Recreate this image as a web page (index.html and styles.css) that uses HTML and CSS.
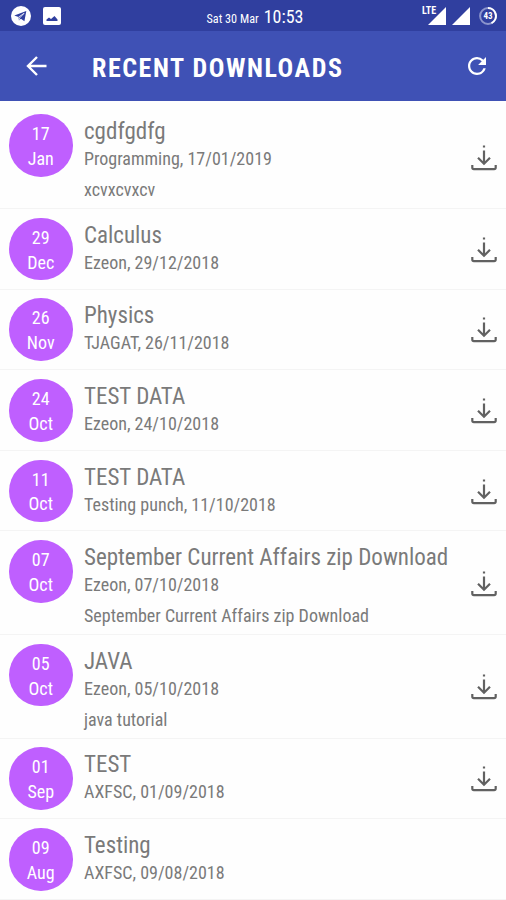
FILE: index.html
```html
<!DOCTYPE html>
<html lang="en">
<head>
  <meta charset="UTF-8">
  <meta name="viewport" content="width=device-width, initial-scale=1.0">
  <title>Recent Downloads</title>
  <link rel="stylesheet" href="styles.css">
</head>
<body>
  <!-- shared download icon -->
  <svg width="0" height="0" class="defs">
    <symbol id="download" viewBox="0 0 26 26">
      <path d="M13 .5v2M13 5.500v13M7 12.800l6 6 6-6M1.300 20v2.600q0 1.600 1.600 1.600h20.200q1.600 0 1.600-1.600V20"/>
    </symbol>
  </svg>

  <div class="status-bar">
    <div class="status-left">
      <svg width="20" height="20" viewBox="0 0 20 20">
        <circle cx="10" cy="10" r="10" fill="#fff"/>
        <path d="M3.300 9.600L15.300 5l-1.900 10.200-3.500-2.500-2 1.900-.4-3.500z" fill="#303f9f"/>
        <path d="M7.500 11.100l5.600-3.800-4.400 4.600-.8 2.300" fill="none" stroke="#fff" stroke-width=".8"/>
      </svg>
      <svg width="18" height="18" viewBox="0 0 18 18">
        <rect width="18" height="18" rx="2" fill="#fff"/>
        <path d="M3.500 14v-1.500l2.500-2 2 1.500L11.500 9l3 3.500V14z" fill="#303f9f"/>
      </svg>
    </div>
    <div class="clock"><span class="date">Sat 30 Mar</span><span class="time">10:53</span></div>
    <div class="status-right">
      <div class="signal">
        <svg width="18" height="18" viewBox="0 0 18 18"><path d="M18 0v18H0z" fill="#fff"/></svg>
        <span class="lte">LTE</span>
      </div>
      <svg width="18" height="18" viewBox="0 0 18 18"><path d="M18 0v18H0z" fill="#fff"/></svg>
      <div class="battery">
        <svg width="18" height="18" viewBox="0 0 18 18" fill="none">
          <circle cx="9" cy="9" r="7.900" stroke="#8c95cc" stroke-width="2"/>
          <path d="M9 1.100a7.900 7.900 0 0 1 3.500 15" stroke="#fff" stroke-width="2"/>
        </svg>
        <span>43</span>
      </div>
    </div>
  </div>

  <header class="toolbar">
    <svg class="back" width="21" height="20" viewBox="0 0 21 20"><path d="M20.500 10H2M11 1L2 10l9 9"/></svg>
    <h1>RECENT DOWNLOADS</h1>
    <svg class="refresh" width="18" height="18" viewBox="4 4 16 16"><path d="M17.650 6.350A7.958 7.958 0 0 0 12 4c-4.420 0-7.990 3.580-7.990 8s3.570 8 7.990 8c3.730 0 6.840-2.550 7.730-6h-2.080A5.990 5.990 0 0 1 12 18c-3.310 0-6-2.690-6-6s2.690-6 6-6c1.660 0 3.140.690 4.220 1.780L13 11h7V4l-2.350 2.350z"/></svg>
  </header>

  <ul class="list">
    <li class="row tall">
      <div class="badge"><span>17</span><span>Jan</span></div>
      <div class="text">
        <h2>cgdfgdfg</h2>
        <p>Programming, 17/01/2019</p>
        <p class="desc">xcvxcvxcv</p>
      </div>
      <svg class="dl"><use href="#download"/></svg>
    </li>
    <li class="row">
      <div class="badge"><span>29</span><span>Dec</span></div>
      <div class="text">
        <h2>Calculus</h2>
        <p>Ezeon, 29/12/2018</p>
      </div>
      <svg class="dl"><use href="#download"/></svg>
    </li>
    <li class="row">
      <div class="badge"><span>26</span><span>Nov</span></div>
      <div class="text">
        <h2>Physics</h2>
        <p>TJAGAT, 26/11/2018</p>
      </div>
      <svg class="dl"><use href="#download"/></svg>
    </li>
    <li class="row">
      <div class="badge"><span>24</span><span>Oct</span></div>
      <div class="text">
        <h2>TEST DATA</h2>
        <p>Ezeon, 24/10/2018</p>
      </div>
      <svg class="dl"><use href="#download"/></svg>
    </li>
    <li class="row">
      <div class="badge"><span>11</span><span>Oct</span></div>
      <div class="text">
        <h2>TEST DATA</h2>
        <p>Testing punch, 11/10/2018</p>
      </div>
      <svg class="dl"><use href="#download"/></svg>
    </li>
    <li class="row tall">
      <div class="badge"><span>07</span><span>Oct</span></div>
      <div class="text">
        <h2>September Current Affairs zip Download</h2>
        <p>Ezeon, 07/10/2018</p>
        <p class="desc">September Current Affairs zip Download</p>
      </div>
      <svg class="dl"><use href="#download"/></svg>
    </li>
    <li class="row tall">
      <div class="badge"><span>05</span><span>Oct</span></div>
      <div class="text">
        <h2>JAVA</h2>
        <p>Ezeon, 05/10/2018</p>
        <p class="desc">java tutorial</p>
      </div>
      <svg class="dl"><use href="#download"/></svg>
    </li>
    <li class="row">
      <div class="badge"><span>01</span><span>Sep</span></div>
      <div class="text">
        <h2>TEST</h2>
        <p>AXFSC, 01/09/2018</p>
      </div>
      <svg class="dl"><use href="#download"/></svg>
    </li>
    <li class="row">
      <div class="badge"><span>09</span><span>Aug</span></div>
      <div class="text">
        <h2>Testing</h2>
        <p>AXFSC, 09/08/2018</p>
      </div>
    </li>
  </ul>
</body>
</html>
```
FILE: styles.css
```css
:root {
  --primary: #3f51b5;
  --primary-dark: #303f9f;
  --badge: #bf5fff;
  --text: #7a7a7a;
}
* {
  box-sizing: border-box;
}
body {
  margin: 0;
  height: 900px;
  overflow: hidden;
  background: #fefefe;
  color: var(--text);
  font-family: 'Roboto Condensed', Roboto, sans-serif;
  font-stretch: 75%;
}
h1, h2, p {
  margin: 0;
  font-weight: 400;
  white-space: nowrap;
}
.defs {
  position: absolute;
}
.status-bar {
  height: 31px;
  padding: 1px 9px 0 11px;
  display: grid;
  grid-template-columns: 1fr auto 1fr;
  align-items: center;
  background: var(--primary-dark);
  color: #fff;
}
.status-left, .status-right {
  display: flex;
  align-items: center;
  gap: 12px;
}
.status-right {
  justify-content: flex-end;
  gap: 6px;
}
.status-right svg, .status-left svg {
  display: block;
}
.clock {
  display: flex;
  align-items: baseline;
  gap: 5px;
  padding: 1px 0 0 2px;
}
.date {
  font-size: 12.200px;
}
.time {
  font-size: 18px;
}
.signal {
  position: relative;
}
.lte {
  position: absolute;
  left: -6px;
  top: -1px;
  font-size: 10px;
  line-height: 9px;
  font-weight: 700;
  background: var(--primary-dark);
}
.battery {
  position: relative;
  margin-left: 3px;
}
.battery span {
  position: absolute;
  inset: 0;
  line-height: 18px;
  text-align: center;
  font-size: 9px;
  font-weight: 700;
}
.toolbar {
  height: 70px;
  padding: 0 20px 0 26px;
  display: flex;
  align-items: center;
  background: var(--primary);
  color: #fff;
}
.toolbar h1 {
  flex: 1;
  margin-left: 45px;
  padding-top: 3px;
  font-size: 26px;
  font-weight: 700;
  letter-spacing: 1.550px;
}
.back {
  fill: none;
  stroke: #fff;
  stroke-width: 2.400;
}
.refresh {
  fill: #fff;
}
.list {
  list-style: none;
  margin: 0;
  padding: 4.500px 0 0;
}
.row {
  height: 80.600px;
  padding: 0 9px;
  display: flex;
  align-items: center;
  border-bottom: 1px solid #f4f4f4;
}
.row.tall {
  height: 103.600px;
}
.badge {
  align-self: flex-start;
  width: 63.500px;
  height: 62.700px;
  margin-top: 8.700px;
  padding-top: 8px;
  border-radius: 50%;
  display: flex;
  flex-direction: column;
  align-items: center;
  background: var(--badge);
  color: #fff;
  font-size: 18px;
  line-height: 24.800px;
}
.text {
  flex: 1;
  align-self: flex-start;
  margin: 12.700px 0 0 11.500px;
}
.text h2 {
  font-size: 23px;
  line-height: 27px;
}
.text p {
  font-size: 18px;
  line-height: 27.500px;
}
.text .desc {
  margin-top: 3.500px;
}
.dl {
  width: 26px;
  height: 26px;
  margin-top: 2px;
  fill: none;
  stroke: #616161;
  stroke-width: 2.200;
}
```
